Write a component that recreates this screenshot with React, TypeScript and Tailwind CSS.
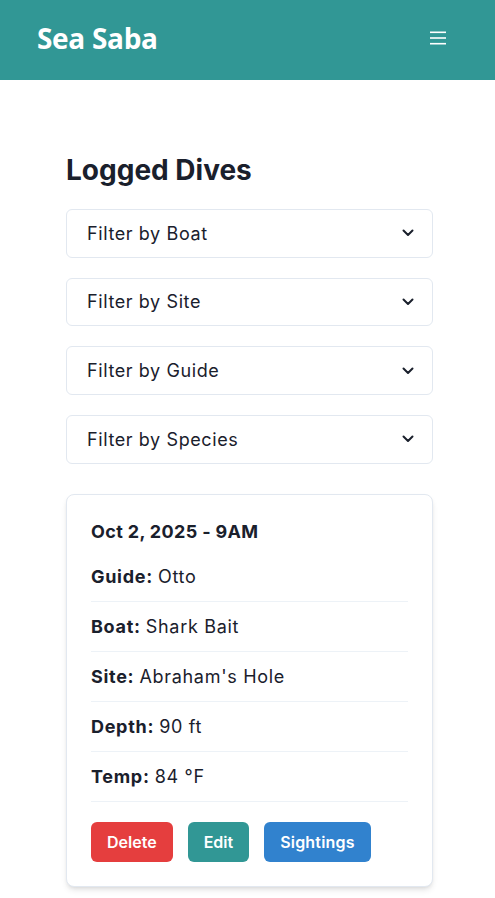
import { FC } from "react";

const filters = ["Filter by Boat", "Filter by Site", "Filter by Guide", "Filter by Species"];

const details = [
  { label: "Guide:", value: "Otto" },
  { label: "Boat:", value: "Shark Bait" },
  { label: "Site:", value: "Abraham's Hole" },
  { label: "Depth:", value: "90 ft" },
  { label: "Temp:", value: "84 °F" },
];

const Chevron: FC = () => (
  <svg width="12" height="8" viewBox="0 0 12 8" fill="none" className="text-[#1a202c]">
    <path d="M1.5 1.5L6 6L10.5 1.5" stroke="currentColor" strokeWidth="2" strokeLinecap="round" strokeLinejoin="round" />
  </svg>
);

const FilterSelect: FC<{ label: string }> = ({ label }) => (
  <div className="flex items-center justify-between h-[48.67px] pl-[20px] pr-[18px] border border-[#e2e8f0] rounded-md bg-white">
    <span className="text-[18px] tracking-[0.6px] text-[#1a202c]">{label}</span>
    <Chevron />
  </div>
);

const DiveCard: FC = () => (
  <div className="mt-[30px] border border-[#e2e8f0] rounded-lg shadow-md bg-white px-6 pt-6 pb-6">
    <h3 className="text-[18px] leading-[26px] font-bold tracking-[0.35px] text-[#1a202c] mb-[7px]">Oct 2, 2025 - 9AM</h3>
    {details.map((d) => (
      <div key={d.label} className="py-3 leading-[25px] text-[18px] text-[#1a202c] border-b border-[#edf2f7]">
        <span className="font-bold tracking-[0.7px]">{d.label}</span>{" "}
        <span className="tracking-[0.7px]">{d.value}</span>
      </div>
    ))}
    <div className="flex gap-[15px] mt-5">
      <button className="h-10 px-4 rounded-md bg-[#e53e3e] text-white font-semibold text-[16px]">Delete</button>
      <button className="h-10 px-4 rounded-md bg-[#319795] text-white font-semibold text-[16px]">Edit</button>
      <button className="h-10 px-4 rounded-md bg-[#3182ce] text-white font-semibold text-[16px] tracking-[0.2px]">Sightings</button>
    </div>
  </div>
);

const App: FC = () => {
  return (
    <div className="min-h-screen bg-white font-['Inter',sans-serif]">
      <header className="h-20 bg-[#319795] flex items-center justify-between pl-[37px] pr-[49px] pb-[4px]">
        <span className="text-white text-[28px] font-bold font-['Open_Sans',sans-serif] tracking-[-0.3px]">Sea Saba</span>
        <svg width="16" height="14" viewBox="0 0 16 14" className="text-white">
          <rect x="0" y="0.5" width="16" height="1.6" fill="currentColor" />
          <rect x="0" y="6.2" width="16" height="1.6" fill="currentColor" />
          <rect x="0" y="11.9" width="16" height="1.6" fill="currentColor" />
        </svg>
      </header>
      <main className="pl-[66px] pr-[62px] pt-[73px] pb-10">
        <h2 className="text-[28px] leading-[34px] font-bold text-[#1a202c] mb-[22px]">Logged Dives</h2>
        <div className="flex flex-col gap-5">
          {filters.map((f) => (
            <FilterSelect label={f} key={f} />
          ))}
        </div>
        <DiveCard />
      </main>
    </div>
  );
};

export default App;
